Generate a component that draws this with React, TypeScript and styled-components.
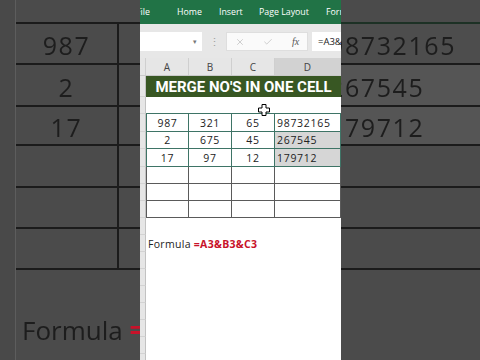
import styled, { createGlobalStyle } from 'styled-components';
import { X, Check } from 'lucide-react';

const GlobalStyle = createGlobalStyle`
  * { box-sizing: border-box; }
  html, body { margin: 0; padding: 0; background: #4b4b4b; }
  body {
    width: 480px;
    height: 360px;
    overflow: hidden;
    font-family: "Open Sans", "Liberation Sans", sans-serif;
  }
`;

const Page = styled.div`
  display: flex;
  width: 480px;
  height: 360px;
  overflow: hidden;
  background: #4b4b4b;`;

/* zoomed, darkened copy of the sheet on each side */
const Backdrop = styled.div<{ $w: number }>`
  width: ${p => p.$w}px;
  flex: none;
  height: 100%;
  overflow: hidden;
  display: flex;
  flex-direction: column;
  background: #4b4b4b;
  filter: blur(0.4px);`;

const BdRow = styled.div<{ $h?: number }>`
  display: flex;
  flex: ${p => (p.$h ? 'none' : '1')};
  height: ${p => (p.$h ? `${p.$h}px` : 'auto')};`;

const BdHead = styled.div`
  width: 16px;
  flex: none;
  border-right: 1px solid #5d5d5d;
  background: #494949;`;

const BdCell = styled.div<{ $w?: number; $line?: string; $divider?: boolean; $fill?: string }>`
  width: ${p => (p.$w ? `${p.$w}px` : 'auto')};
  flex: ${p => (p.$w ? 'none' : '1')};
  border-bottom: ${p => (p.$line ? `2px solid ${p.$line}` : 'none')};
  border-right: ${p => (p.$divider ? '2px solid #1b1b1b' : 'none')};
  background: ${p => p.$fill || 'transparent'};
  display: flex;
  align-items: center;
  justify-content: ${p => (p.$w ? 'center' : 'flex-start')};
  overflow: hidden;
  padding-top: 3px;
  color: #1d1d1d;
  font: 25px "Open Sans", sans-serif;
  letter-spacing: 1.6px;
  white-space: nowrap;`;

const BdShift = styled.span`
  margin-left: -12px;`;

const BdFormula = styled.div`
  flex: 1;
  padding: 45px 0 0 6px;
  color: #1d1d1d;
  font: 26px/30px "Open Sans", sans-serif;
  white-space: nowrap;
  overflow: hidden;`;

const Red = styled.span<{ $bold?: boolean }>`
  color: #c8122a;
  font-weight: ${p => (p.$bold ? 700 : 400)};`;

/* the actual spreadsheet in the middle */
const Sheet = styled.div`
  width: 201px;
  flex: none;
  height: 100%;
  display: flex;
  flex-direction: column;
  background: #fff;
  position: relative;
  overflow: hidden;`;

const Ribbon = styled.div`
  height: 24px;
  flex: none;
  margin-left: -4px;
  background: #217346;
  display: grid;
  grid-template-columns: 41px 42px 40px 67px 40px;
  align-items: center;
  color: #fff;
  font: 8.8px "Open Sans", sans-serif;
  white-space: nowrap;`;

const FormulaBar = styled.div`
  height: 34px;
  flex: none;
  background: #e7e7e7;
  display: flex;
  align-items: center;
  padding-top: 1px;`;

const NameBox = styled.div`
  width: 62px;
  height: 19px;
  flex: none;
  background: #fff;
  display: flex;
  align-items: center;
  justify-content: flex-end;
  padding-right: 5px;
  font-size: 7px;
  color: #777;`;

const Grip = styled.div`
  width: 24px;
  flex: none;
  text-align: center;
  color: #a0a0a0;
  font-size: 11px;`;

const FxBox = styled.div`
  width: 82px;
  height: 19px;
  flex: none;
  background: #fafafa;
  border: 1px solid #dedede;
  display: grid;
  grid-template-columns: 26px 29px 27px;
  align-items: center;
  justify-items: center;
  color: #b4b4b4;`;

const Fx = styled.span`
  font: italic 10px "Liberation Serif", serif;
  color: #555;`;

const FormulaInput = styled.div`
  flex: 1;
  height: 19px;
  margin-left: 4px;
  background: #fff;
  padding-left: 6px;
  display: flex;
  align-items: center;
  font-size: 9.5px;
  color: #222;
  white-space: nowrap;
  overflow: hidden;`;

const COLS = '6px 43px 43px 43px 66px';

const ColHeads = styled.div`
  display: grid;
  grid-template-columns: ${COLS};
  height: 18px;
  flex: none;
  background: #e6e6e6;
  border-bottom: 1px solid #cacaca;`;

const ColHead = styled.div<{ $on?: boolean }>`
  background: ${p => (p.$on ? '#d2d2d2' : '#e6e6e6')};
  border-right: 1px solid #cfcfcf;
  display: flex;
  align-items: center;
  justify-content: center;
  font-size: 10px;
  color: #444;`;

const Row = styled.div<{ $h: number }>`
  display: grid;
  grid-template-columns: ${COLS};
  height: ${p => p.$h}px;
  flex: none;`;

const RowHead = styled.div`
  background: #e6e6e6;
  border-right: 1px solid #c2c2c2;
  border-bottom: 1px solid #d3d3d3;`;

const Title = styled.div`
  grid-column: 2 / -1;
  background: #385723;
  color: #fff;
  display: flex;
  align-items: center;
  justify-content: center;
  font: 700 15px Roboto, "Liberation Sans", sans-serif;
  white-space: nowrap;`;

const Cell = styled.div<{ $line?: string; $first?: boolean; $bottom?: string; $fill?: boolean; $left?: boolean }>`
  border-right: ${p => (p.$line ? `1px solid ${p.$line}` : 'none')};
  border-bottom: ${p => (p.$line ? `1px solid ${p.$line}` : p.$bottom ? `1px solid ${p.$bottom}` : 'none')};
  border-left: ${p => (p.$first && p.$line ? `1px solid ${p.$line}` : 'none')};
  background: ${p => (p.$fill ? '#d6d6d6' : '#fff')};
  display: flex;
  align-items: center;
  justify-content: ${p => (p.$left ? 'flex-start' : 'center')};
  padding-left: ${p => (p.$left ? '2px' : '0')};
  font-size: 10.5px;
  letter-spacing: 0.7px;
  color: #222;
  white-space: nowrap;`;

const FormulaCell = styled.div`
  grid-column: 2 / -1;
  display: flex;
  align-items: center;
  padding-left: 2px;
  font-size: 10.5px;
  letter-spacing: 0.3px;
  color: #222;
  white-space: nowrap;`;

const Cursor = styled.svg`
  position: absolute;
  left: 118px;
  top: 104px;`;

const TEAL = '#3e7466';
const GREY = '#5a5a5a';

const data = [
  { h: 18, v: ['987', '321', '65', '98732165'], fill: false },
  { h: 17, v: ['2', '675', '45', '267545'], fill: true },
  { h: 18, v: ['17', '97', '12', '179712'], fill: true },
];

const bdRows = [
  { h: 41, l: '987', r: '98732165', fill: '#4d4d4d' },
  { h: 42, l: '2', r: '267545', fill: '#555' },
  { h: 39, l: '17', r: '179712', fill: '#555' },
  { h: 42, l: '', r: '', fill: '' },
  { h: 41, l: '', r: '', fill: '' },
  { h: 41, l: '', r: '', fill: '' },
];

const App = () => {
  return (
    <Page>
      <GlobalStyle />
      <Backdrop $w={140}>
        <BdRow $h={24}>
          <BdHead />
          <BdCell $w={103} $line="#1b1b1b" />
          <BdCell $line="#1b1b1b" />
        </BdRow>
        {bdRows.map((r, i) => (
          <BdRow $h={r.h} key={i}>
            <BdHead />
            <BdCell $w={103} $line="#1b1b1b" $divider>{r.l}</BdCell>
            <BdCell $line="#1b1b1b" />
          </BdRow>
        ))}
        <BdRow>
          <BdHead />
          <BdFormula>Formula <Red $bold>=A3</Red></BdFormula>
        </BdRow>
      </Backdrop>

      <Sheet>
        <Ribbon>
          <span>File</span>
          <span>Home</span>
          <span>Insert</span>
          <span>Page Layout</span>
          <span>Formulas</span>
        </Ribbon>
        <FormulaBar>
          <NameBox>▾</NameBox>
          <Grip>⋮</Grip>
          <FxBox>
            <X size={10} strokeWidth={1.5} />
            <Check size={10} strokeWidth={1.5} />
            <Fx>fx</Fx>
          </FxBox>
          <FormulaInput>=A3&amp;B3&amp;C3</FormulaInput>
        </FormulaBar>
        <ColHeads>
          <ColHead />
          <ColHead>A</ColHead>
          <ColHead>B</ColHead>
          <ColHead>C</ColHead>
          <ColHead $on>D</ColHead>
        </ColHeads>

        <Row $h={21}>
          <RowHead />
          <Title>MERGE NO'S IN ONE CELL</Title>
        </Row>
        <Row $h={17}>
          <RowHead />
          <Cell $bottom={TEAL} />
          <Cell $bottom={TEAL} />
          <Cell $bottom={TEAL} />
          <Cell $bottom={TEAL} />
        </Row>
        {data.map((r, i) => (
          <Row $h={r.h} key={i}>
            <RowHead />
            <Cell $line={TEAL} $first>{r.v[0]}</Cell>
            <Cell $line={TEAL}>{r.v[1]}</Cell>
            <Cell $line={TEAL}>{r.v[2]}</Cell>
            <Cell $line={TEAL} $left $fill={r.fill}>{r.v[3]}</Cell>
          </Row>
        ))}
        {[0, 1, 2].map(i => (
          <Row $h={17} key={i}>
            <RowHead />
            <Cell $line={GREY} $first />
            <Cell $line={GREY} />
            <Cell $line={GREY} />
            <Cell $line={GREY} />
          </Row>
        ))}
        <Row $h={17}>
          <RowHead />
        </Row>
        <Row $h={17}>
          <RowHead />
          <FormulaCell>Formula&nbsp;<Red $bold>=A3&amp;B3&amp;C3</Red></FormulaCell>
        </Row>
        {[0, 1, 2, 3, 4, 5, 6].map(i => (
          <Row $h={17} key={i}>
            <RowHead />
          </Row>
        ))}

        <Cursor width="12" height="12" viewBox="0 0 12 12">
          <path d="M4 0.5h4v3.5h3.5v4h-3.5v3.5h-4v-3.5h-3.5v-4h3.5z" fill="#fff" stroke="#000" strokeWidth="1" />
        </Cursor>
      </Sheet>

      <Backdrop $w={139}>
        <BdRow $h={24}>
          <BdCell $line="#1d3125" />
        </BdRow>
        {bdRows.map((r, i) => (
          <BdRow $h={r.h} key={i}>
            <BdCell $line="#1b1b1b" $fill={r.fill}>
              <BdShift>{r.r}</BdShift>
            </BdCell>
          </BdRow>
        ))}
        <BdRow />
      </Backdrop>
    </Page>
  );
};

export default App;
